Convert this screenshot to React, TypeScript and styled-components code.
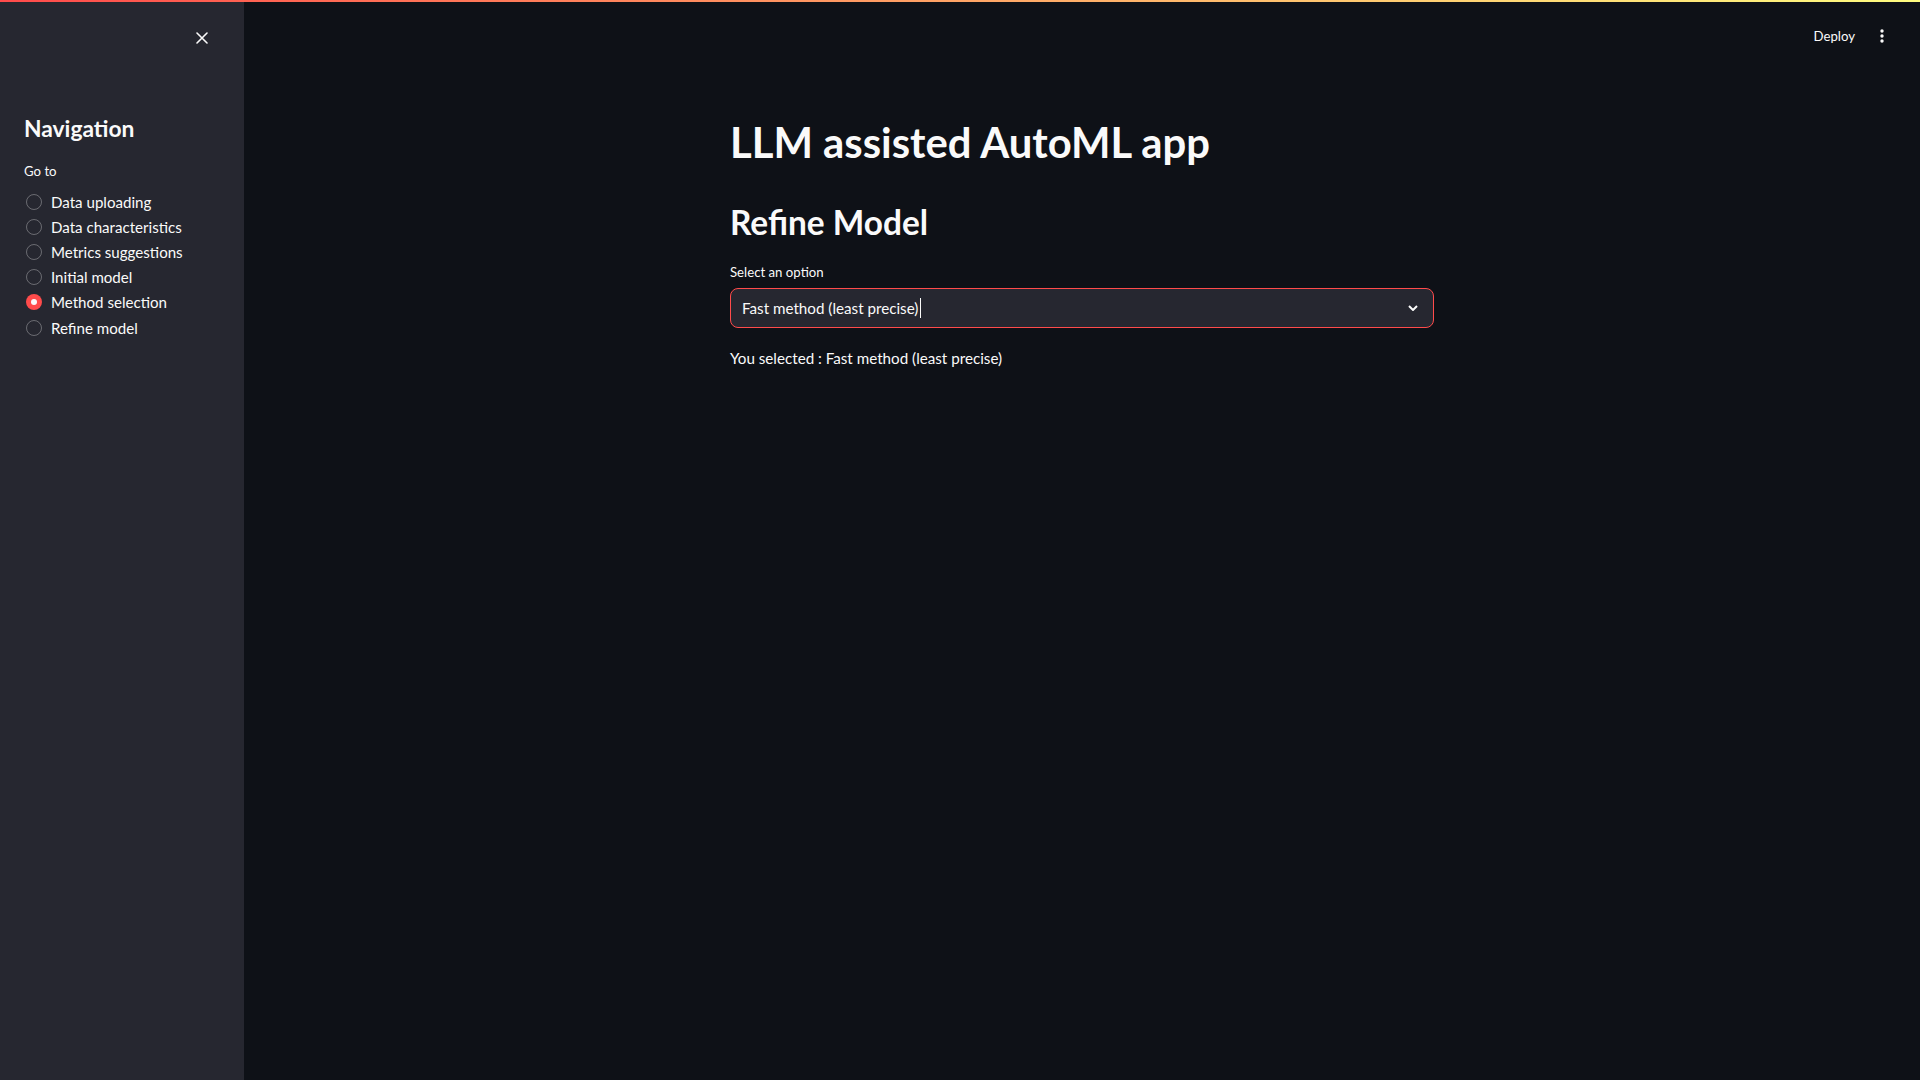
import React from 'react'
import styled, { createGlobalStyle } from 'styled-components'

const FONT = `Lato, "Noto Sans", sans-serif`

const GlobalStyle = createGlobalStyle`
  html, body {
    margin: 0;
    padding: 0;
    background: #0e1117;
    color: #fafafa;
    font-family: ${FONT};
  }
  * { box-sizing: border-box; }
`

// thin red-to-yellow strip across the top of the app
const Decoration = styled.div`
  position: fixed;
  top: 0;
  left: 0;
  right: 0;
  height: 2px;
  z-index: 10;
  background: linear-gradient(90deg, rgb(255, 75, 75), rgb(255, 253, 128));
`

const Shell = styled.div`
  display: flex;
  min-height: 100vh;
`

const Sidebar = styled.aside`
  width: 244px;
  flex-shrink: 0;
  background: #262730;
  display: flex;
  flex-direction: column;
`

const SidebarTop = styled.div`
  height: 76px;
  display: flex;
  align-items: center;
  justify-content: flex-end;
  padding-right: 36px;
`

const IconButton = styled.button`
  background: none;
  border: none;
  padding: 0;
  color: #fafafa;
  display: flex;
  align-items: center;
  cursor: pointer;
`

const SidebarBody = styled.div`
  padding: 38px 24px 0;
`

const NavTitle = styled.h2`
  margin: 0;
  font-size: 22.8px;
  font-weight: 700;
  line-height: 29px;
`

const FieldLabel = styled.div<{ $gap: number }>`
  font-size: 13.2px;
  line-height: 20px;
  margin-top: ${(p) => p.$gap}px;
`

const RadioList = styled.div`
  display: flex;
  flex-direction: column;
  margin-top: 8px;
`

const RadioRow = styled.label`
  display: flex;
  align-items: center;
  gap: 9px;
  height: 25.2px;
  font-size: 15.1px;
  cursor: pointer;
`

const RadioDot = styled.span<{ $checked: boolean }>`
  width: 16px;
  height: 16px;
  border-radius: 50%;
  margin-left: 2px;
  flex-shrink: 0;
  display: flex;
  align-items: center;
  justify-content: center;
  border: ${(p) => (p.$checked ? 'none' : '1px solid rgba(250, 250, 250, 0.32)')};
  background: ${(p) => (p.$checked ? '#ff4b4b' : 'transparent')};
  &::after {
    content: '';
    display: ${(p) => (p.$checked ? 'block' : 'none')};
    width: 6px;
    height: 6px;
    border-radius: 50%;
    background: #fafafa;
  }
`

const Main = styled.main`
  flex: 1;
  display: flex;
  flex-direction: column;
`

const Header = styled.header`
  height: 72px;
  display: flex;
  align-items: center;
  justify-content: flex-end;
  gap: 25px;
  padding-right: 36px;
`

const DeployButton = styled.button`
  background: none;
  border: none;
  color: #fafafa;
  font-family: ${FONT};
  font-size: 13.2px;
  padding: 0;
  cursor: pointer;
`

const Block = styled.div`
  width: 704px;
  margin: 0 auto;
  padding-bottom: 96px;
`

const Title = styled.h1`
  margin: 44px 0 0;
  font-size: 41.8px;
  font-weight: 700;
  line-height: 52px;
`

const Subtitle = styled.h2`
  margin: 33px 0 0;
  font-size: 33.4px;
  font-weight: 700;
  line-height: 43px;
`

const SelectBox = styled.div`
  margin-top: 6px;
  height: 40px;
  border: 1px solid #ff4b4b;
  border-radius: 8px;
  background: #262730;
  display: flex;
  align-items: center;
  justify-content: space-between;
  padding: 0 15px 0 11px;
  font-size: 15.2px;
`

const SelectValue = styled.span`
  display: flex;
  align-items: center;
`

const Caret = styled.span`
  width: 1px;
  height: 20px;
  margin-left: 2px;
  background: #fafafa;
`

const Paragraph = styled.p`
  margin: 18px 0 0;
  font-size: 15.2px;
  line-height: 24px;
`

const pages = [
  'Data uploading',
  'Data characteristics',
  'Metrics suggestions',
  'Initial model',
  'Method selection',
  'Refine model',
]

export default function App() {
  const selected = 'Method selection'
  const option = 'Fast method (least precise)'
  return (
    <>
      <GlobalStyle />
      <Decoration />
      <Shell>
        <Sidebar>
          <SidebarTop>
            <IconButton aria-label="Close sidebar">
              <svg width="12" height="12" viewBox="0 0 12 12">
                <path d="M1 1L11 11M11 1L1 11" stroke="#fafafa" strokeWidth="1.6" strokeLinecap="round" />
              </svg>
            </IconButton>
          </SidebarTop>
          <SidebarBody>
            <NavTitle>Navigation</NavTitle>
            <FieldLabel $gap={18}>Go to</FieldLabel>
            <RadioList>
              {pages.map((p) => (
                <RadioRow key={p}>
                  <RadioDot $checked={p === selected} />
                  {p}
                </RadioRow>
              ))}
            </RadioList>
          </SidebarBody>
        </Sidebar>
        <Main>
          <Header>
            <DeployButton>Deploy</DeployButton>
            <IconButton aria-label="Main menu">
              <svg width="4" height="14" viewBox="0 0 4 14">
                <circle cx="2" cy="2" r="1.7" fill="#fafafa" />
                <circle cx="2" cy="7" r="1.7" fill="#fafafa" />
                <circle cx="2" cy="12" r="1.7" fill="#fafafa" />
              </svg>
            </IconButton>
          </Header>
          <Block>
            <Title>LLM assisted AutoML app</Title>
            <Subtitle>Refine Model</Subtitle>
            <FieldLabel $gap={18}>Select an option</FieldLabel>
            <SelectBox>
              <SelectValue>
                {option}
                <Caret />
              </SelectValue>
              <svg width="10" height="6" viewBox="0 0 10 6">
                <path d="M1 1L5 5L9 1" fill="none" stroke="#fafafa" strokeWidth="2" />
              </svg>
            </SelectBox>
            <Paragraph>You selected : {option}</Paragraph>
          </Block>
        </Main>
      </Shell>
    </>
  )
}
